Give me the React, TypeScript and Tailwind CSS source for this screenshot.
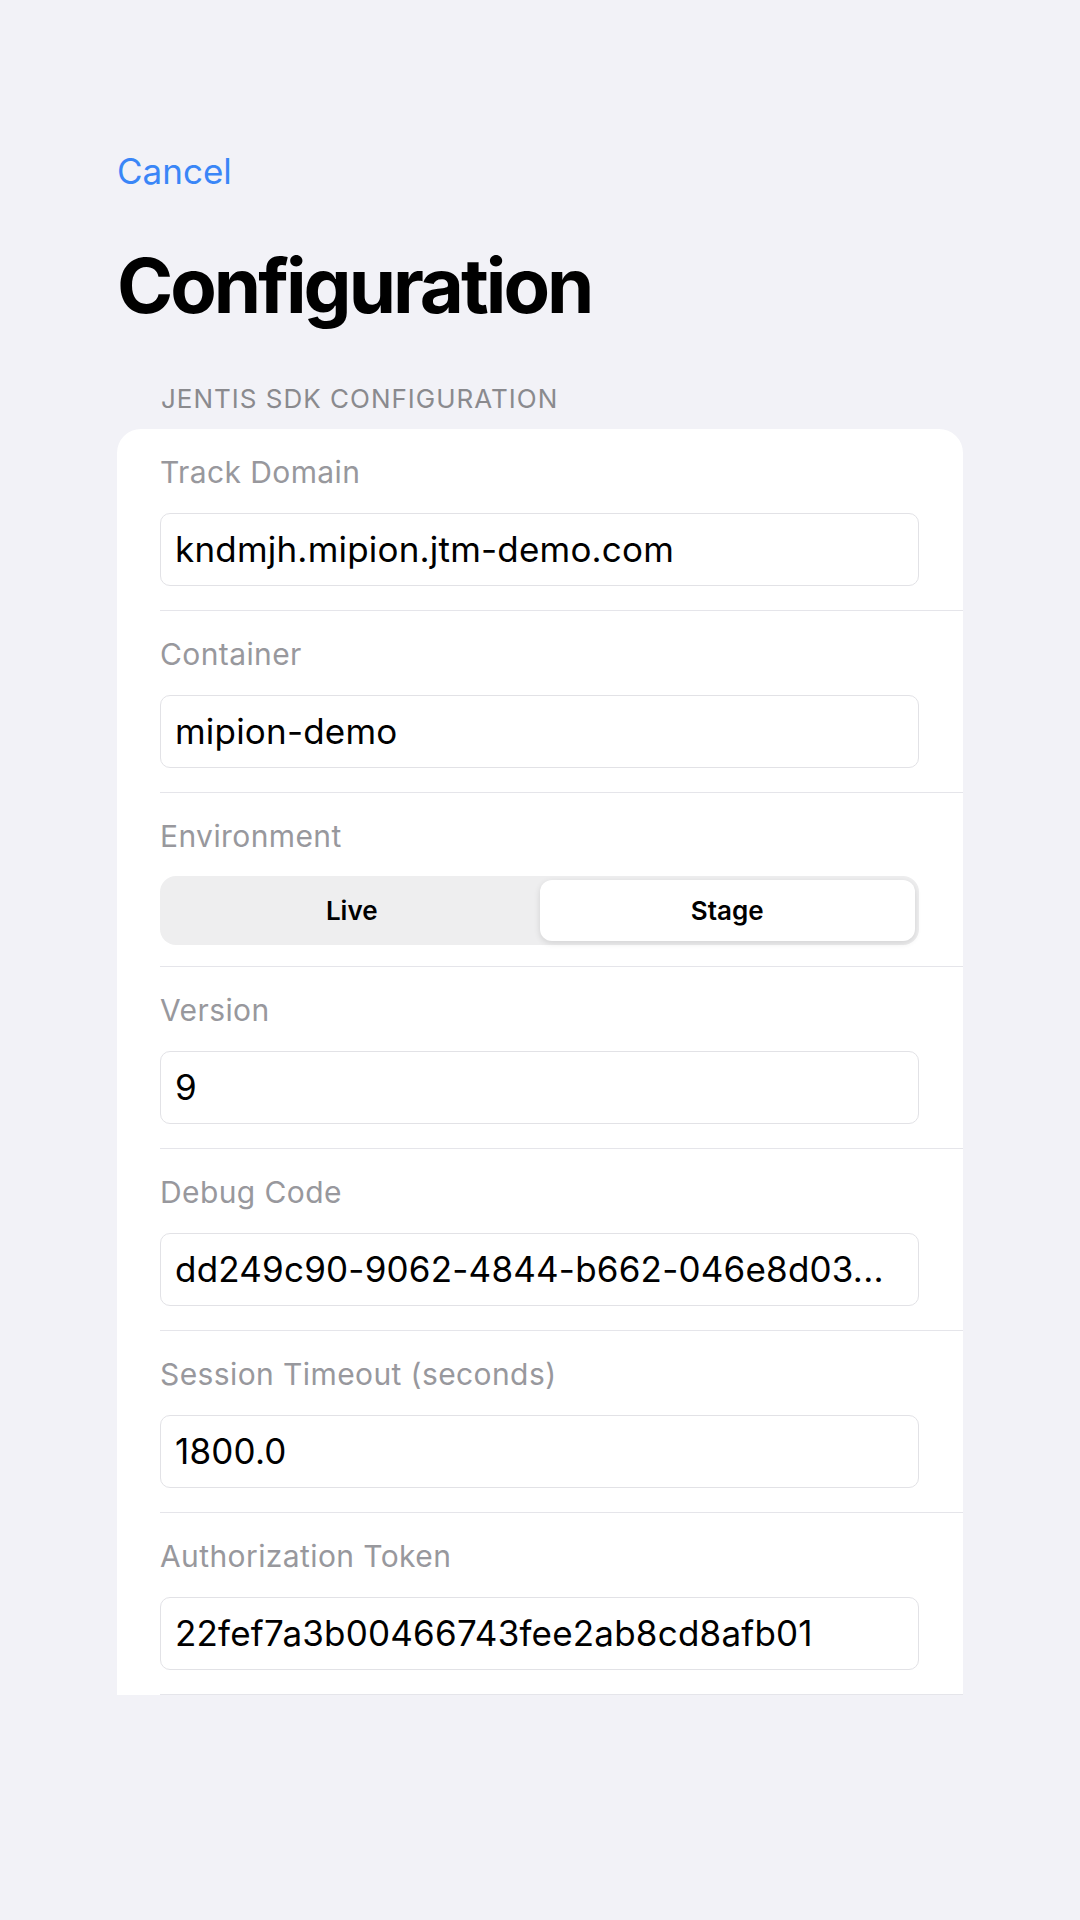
import React from "react";

const fields = [
  { label: "Track Domain", value: "kndmjh.mipion.jtm-demo.com" },
  { label: "Container", value: "mipion-demo" },
  { label: "Environment", segmented: true },
  { label: "Version", value: "9" },
  { label: "Debug Code", value: "dd249c90-9062-4844-b662-046e8d03..." },
  { label: "Session Timeout (seconds)", value: "1800.0" },
  { label: "Authorization Token", value: "22fef7a3b00466743fee2ab8cd8afb01" },
];

function Segmented() {
  return (
    <div className="mt-[22px] mb-[21px] flex h-[69px] rounded-[16px] bg-[#eeeeef] p-[4px]">
      <div className="flex flex-1 items-center justify-center text-[26px] font-semibold text-black">Live</div>
      <div className="flex flex-1 items-center justify-center rounded-[12px] bg-white text-[26px] font-semibold text-black shadow-[0_2px_6px_rgba(0,0,0,0.12)]">
        Stage
      </div>
    </div>
  );
}

export default function App() {
  return (
    <div
      className="min-h-[1920px] w-full bg-[#f2f2f7] px-[117px] pt-[149px]"
      style={{ fontFamily: "Inter, 'Noto Sans', sans-serif" }}
    >
      <div className="text-[35px] leading-[44px] text-[#3a86f7]">Cancel</div>

      <h1 className="mt-[46px] text-[76px] font-bold leading-[92px] tracking-[-3px] text-black">Configuration</h1>

      <div className="mt-[52px] pl-[44px] text-[26px] leading-[32px] tracking-[1px] text-[#8a8a8e]">
        JENTIS SDK CONFIGURATION
      </div>

      <div className="mt-[14px] overflow-hidden rounded-t-[24px] bg-white pl-[43px]">
        {fields.map((f) => (
          <div key={f.label} className="border-b border-[#e5e5ea]">
            <div className="pr-[44px] pt-[25px]">
              <div className="text-[30px] leading-[36px] tracking-[0.4px] text-[#98989d]">{f.label}</div>
              {f.segmented ? (
                <Segmented />
              ) : (
                <div className="mb-[24px] mt-[23px] flex h-[73px] items-center rounded-[10px] border border-[#e2e2e6] px-[14px] text-[35px] tracking-[0.2px] text-black">
                  {f.value}
                </div>
              )}
            </div>
          </div>
        ))}
      </div>
    </div>
  );
}
